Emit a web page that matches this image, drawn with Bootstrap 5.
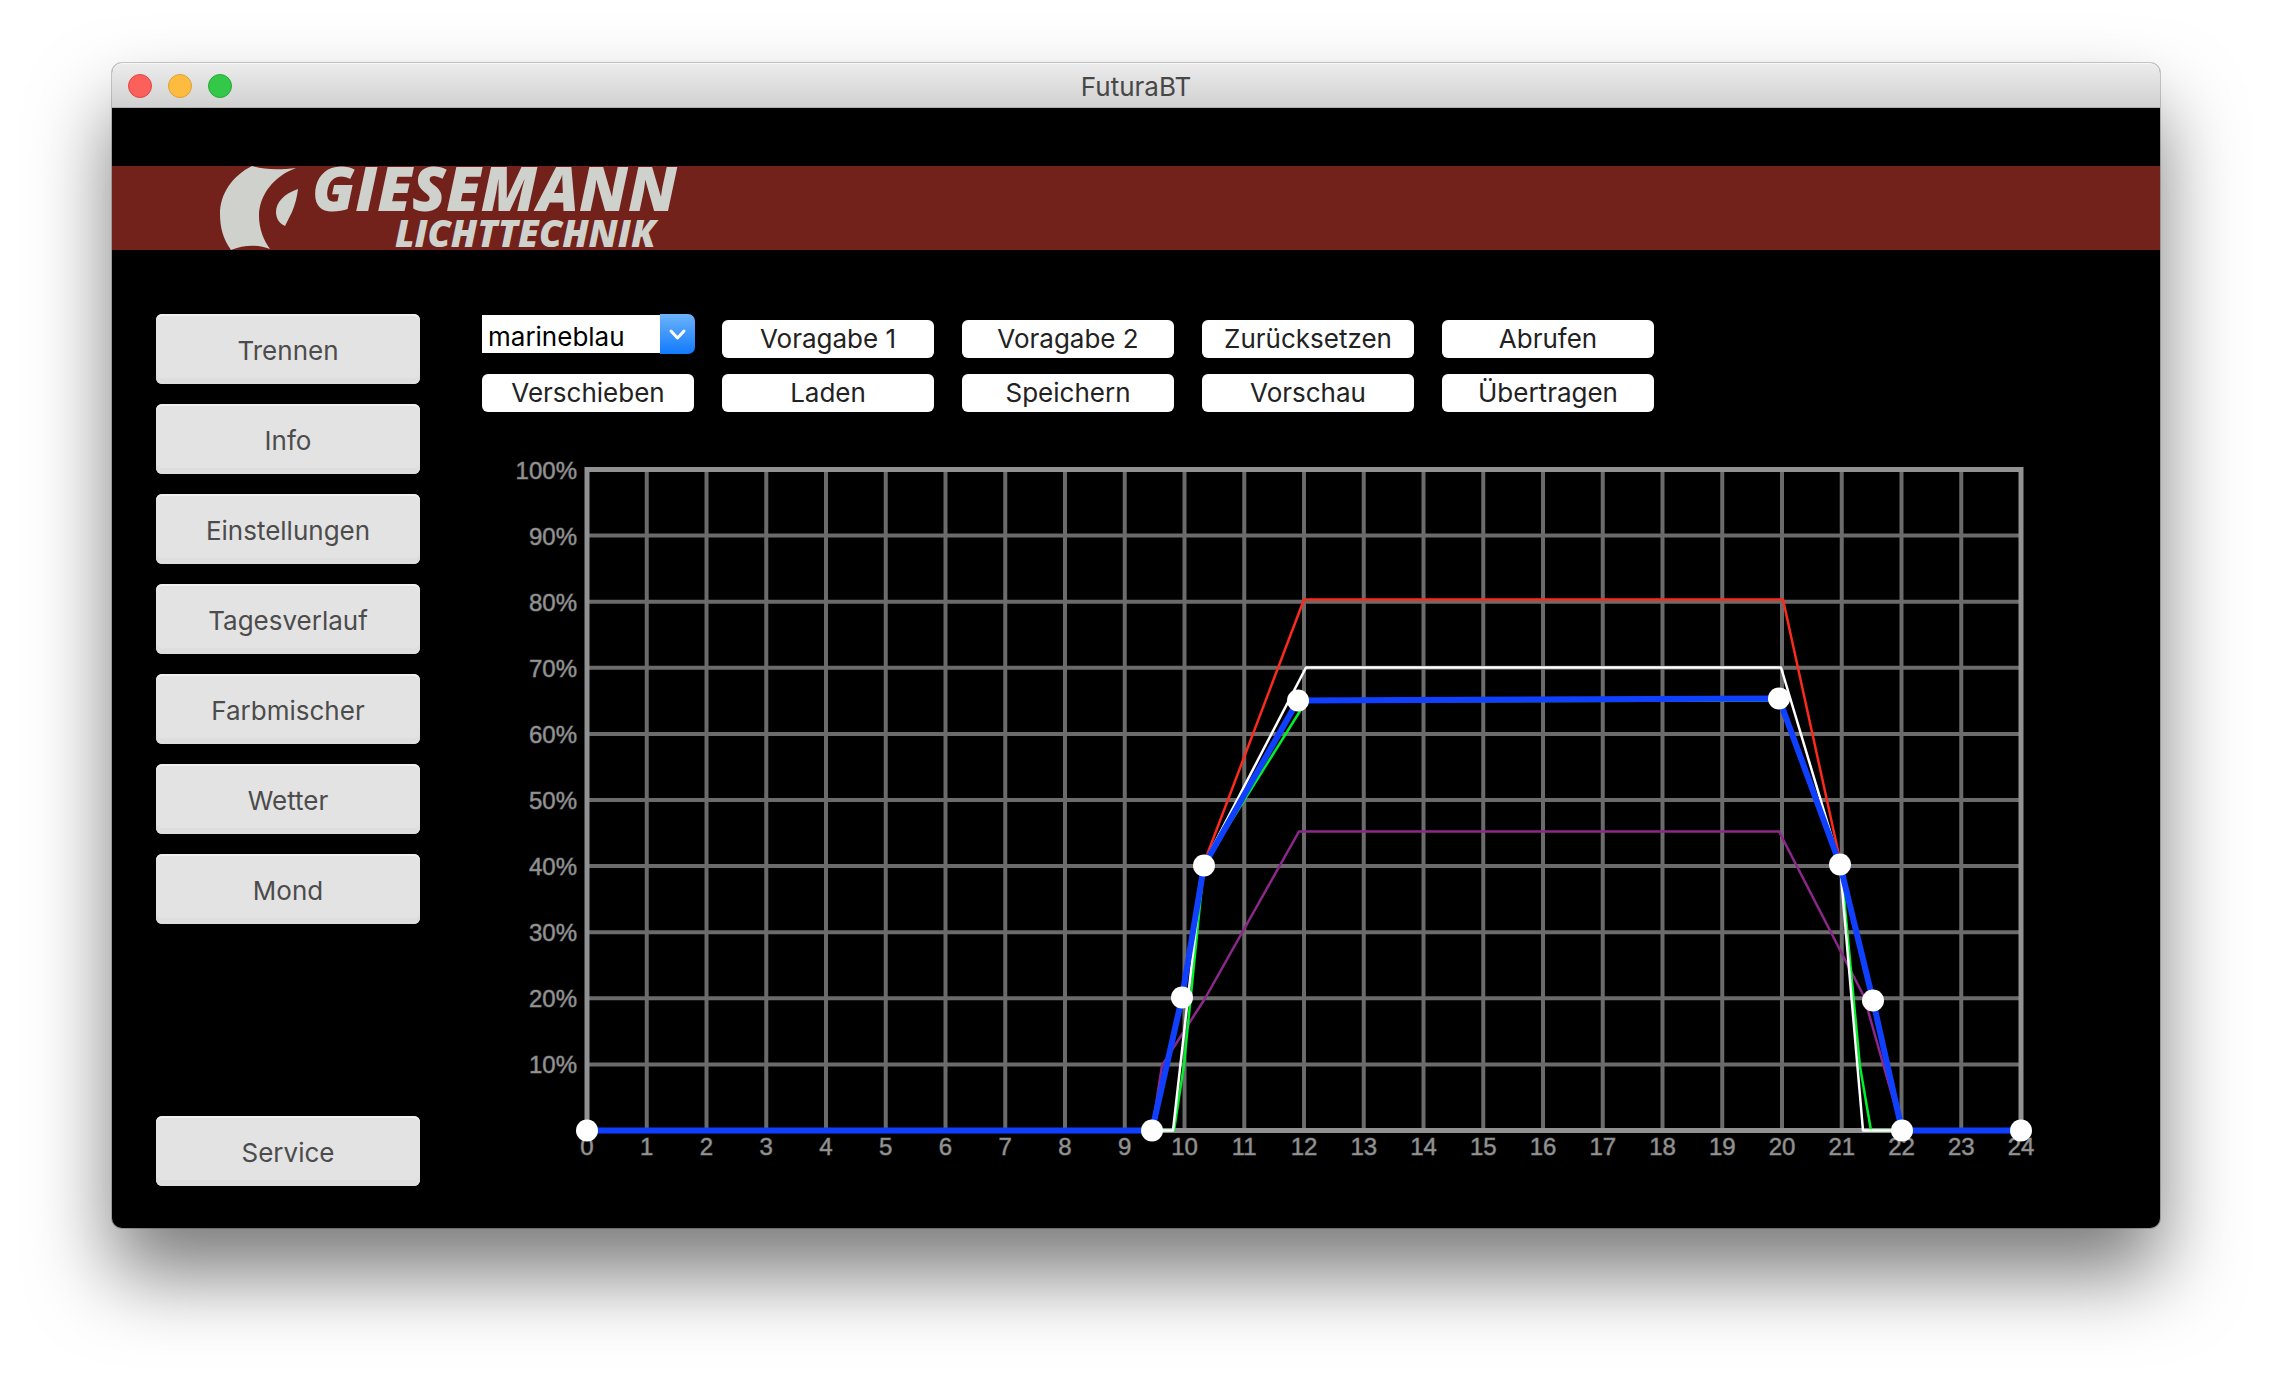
<!DOCTYPE html>
<html lang="de">
<head>
<meta charset="utf-8">
<meta name="viewport" content="width=device-width, initial-scale=1">
<title>FuturaBT</title>
<link href="https://cdn.jsdelivr.net/npm/bootstrap@5.3.0/dist/css/bootstrap.min.css" rel="stylesheet">
<style>
  body { background: #fff; font-family: Inter, Roboto, sans-serif; font-size: 26px; line-height: 32px; }
  .desktop { padding: 63px 112px 160px; }
  .app-window { background: #000; border-radius: 10px; box-shadow: 0 0 0 1px rgba(0,0,0,.2), 0 46px 80px rgba(0,0,0,.52); }
  .titlebar { height: 45px; padding-top: 3px; border-radius: 10px 10px 0 0; background: linear-gradient(#ececec, #d1d1d1); border-bottom: 1px solid #b0b0b0; box-shadow: inset 0 1px 0 #f7f7f7; color: #474747; }
  .lights { left: 16px; top: 11px; gap: 16px; }
  .light { width: 24px; height: 24px; padding: 0; border-radius: 50%; border: 1px solid; }
  .light-close { background: #fc605b; border-color: #df4744; }
  .light-min { background: #fdbc40; border-color: #de9f34; }
  .light-max { background: #34c84a; border-color: #27aa35; }
  .banner-area { padding-top: 58px; }
  .banner { height: 84px; padding-left: 108px; background: #72221a; }
  .content { padding: 64px 82px 42px 44px; gap: 62px; }
  .side { width: 264px; gap: 20px; }
  .btn-side { --bs-btn-color: #4c4c4c; --bs-btn-bg: #e3e3e3; --bs-btn-border-width: 0; --bs-btn-hover-bg: #eee; --bs-btn-border-radius: 6px; --bs-btn-font-size: 26px; height: 70px; padding: 4px 0 0; line-height: 32px; box-shadow: inset 0 2px 0 #f0f0f0, inset 0 -6px 0 #dedede; }
  .tools { display: grid; grid-template-columns: repeat(5, 212px); gap: 16px 28px; margin-bottom: 28px; }
  .btn-tool { --bs-btn-color: #222; --bs-btn-bg: #fff; --bs-btn-border-width: 0; --bs-btn-hover-bg: #eee; --bs-btn-border-radius: 6px; --bs-btn-font-size: 26px; height: 38px; padding: 0; line-height: 38px; align-self: end; }
  .picker { height: 44px; padding-top: 1px; }
  .picker select { appearance: none; display: block; width: 100%; height: 38px; padding: 5px 36px 0 6px; border: 0; border-radius: 0 6px 6px 0; background: #fff; color: #000; line-height: 32px; }
  .picker svg { right: -1px; top: 0; pointer-events: none; }
  .axis { font-family: "Liberation Sans", Arial, sans-serif; font-size: 24px; fill: #929292; stroke: #929292; stroke-width: 1px; stroke-opacity: .5; }
  .brand { font-family: "Open Sans", sans-serif; font-weight: 800; font-style: italic; fill: #cfd1cd; }
  .curve { fill: none; stroke-linejoin: round; }
</style>
<script src="https://cdn.jsdelivr.net/npm/bootstrap@5.3.0/dist/js/bootstrap.bundle.min.js"></script>
</head>
<body>
<div class="desktop">
  <div class="app-window">
    <header class="titlebar position-relative d-flex align-items-center justify-content-center">
      <div class="lights position-absolute d-flex">
        <button type="button" class="light light-close" aria-label="Schließen"></button>
        <button type="button" class="light light-min" aria-label="Minimieren"></button>
        <button type="button" class="light light-max" aria-label="Maximieren"></button>
      </div>
      <span>FuturaBT</span>
    </header>
    <div class="banner-area">
      <div class="banner">
        <svg class="d-block overflow-visible" width="462" height="84" viewBox="0 0 462 84" role="img" aria-label="Giesemann Lichttechnik">
          <g fill="#cfd1cd">
            <path d="M32 0C44 4 60 4 76 2C54 10 39 29 39 50C39 63 44 75 50 83C38 78 23 79 11 84C3 73 0 61 0 48C0 28 12 10 32 0Z"/>
            <path d="M78 23C64 28 56 36 56 46C56 53 60 58 65 60L72 46C75 39 77 31 78 23Z"/>
          </g>
          <text class="brand" font-size="62" x="92" y="45">GIESEMANN</text>
          <text class="brand" font-size="37" x="175" y="81">LICHTTECHNIK</text>
        </svg>
      </div>
    </div>
    <div class="content d-flex">
      <nav class="side d-flex flex-column flex-shrink-0">
        <button type="button" class="btn btn-side">Trennen</button>
        <button type="button" class="btn btn-side">Info</button>
        <button type="button" class="btn btn-side">Einstellungen</button>
        <button type="button" class="btn btn-side">Tagesverlauf</button>
        <button type="button" class="btn btn-side">Farbmischer</button>
        <button type="button" class="btn btn-side">Wetter</button>
        <button type="button" class="btn btn-side">Mond</button>
        <button type="button" class="btn btn-side mt-auto">Service</button>
      </nav>
      <main class="flex-grow-1">
        <div class="tools">
          <div class="picker position-relative">
            <select aria-label="Farbkanal"><option>marineblau</option></select>
            <svg class="position-absolute" width="35" height="40" viewBox="0 0 35 40" aria-hidden="true">
              <defs><linearGradient id="cap" x1="0" y1="0" x2="0" y2="1"><stop offset="0" stop-color="#6cb3fa"/><stop offset="1" stop-color="#117afd"/></linearGradient></defs>
              <path d="M0 0H28A7 7 0 0 1 35 7V33A7 7 0 0 1 28 40H0Z" fill="url(#cap)"/>
              <path d="M11 17L17.500 24L24 17" fill="none" stroke="#fff" stroke-width="3" stroke-linecap="round" stroke-linejoin="round"/>
            </svg>
          </div>
          <button type="button" class="btn btn-tool">Voragabe 1</button>
          <button type="button" class="btn btn-tool">Voragabe 2</button>
          <button type="button" class="btn btn-tool">Zurücksetzen</button>
          <button type="button" class="btn btn-tool">Abrufen</button>
          <button type="button" class="btn btn-tool">Verschieben</button>
          <button type="button" class="btn btn-tool">Laden</button>
          <button type="button" class="btn btn-tool">Speichern</button>
          <button type="button" class="btn btn-tool">Vorschau</button>
          <button type="button" class="btn btn-tool">Übertragen</button>
        </div>
        <svg class="d-block w-100" viewBox="0 0 1596 746" role="img" aria-label="Tagesverlauf in Prozent über 24 Stunden">
          <g transform="translate(105 29.5)">
            <g id="grid" stroke="#6b6b6b" stroke-width="4"></g>
            <rect width="1434" height="661" fill="none" stroke="#929292" stroke-width="5"/>
            <g id="labels" class="axis"></g>
            <polyline class="curve" stroke="#8e278b" stroke-width="2.500" points="565,661 575,596 618,529 712,362 1192,362 1277,527 1315,661"/>
            <polyline class="curve" stroke="#00f128" stroke-width="2.500" points="565,661 587,661 597,595 617,395 719,232 1192,231 1254,395 1273,597 1284,661 1315,661"/>
            <polyline class="curve" stroke="#fb2a1c" stroke-width="2.500" points="616,396 717,130 1196,130 1254,395"/>
            <polyline class="curve" stroke="#fff" stroke-width="2.500" points="565,661 586,661 601,528 616,396 719,198 1194,198 1253,395 1276,661 1315,661"/>
            <polyline class="curve" stroke="#1040ff" stroke-width="6" points="0,661 565,661 595,528 617,396 711,231 1192,229 1253,395 1286,531 1315,661 1434,661"/>
            <g fill="#fff">
              <circle cx="0" cy="661" r="11"/><circle cx="565" cy="661" r="11"/><circle cx="595" cy="528" r="11"/>
              <circle cx="617" cy="396" r="11"/><circle cx="711" cy="231" r="11"/><circle cx="1192" cy="229" r="11"/>
              <circle cx="1253" cy="395" r="11"/><circle cx="1286" cy="531" r="11"/><circle cx="1315" cy="661" r="11"/>
              <circle cx="1434" cy="661" r="11"/>
            </g>
          </g>
        </svg>
      </main>
    </div>
  </div>
</div>
<script>
  const ns = 'http://www.w3.org/2000/svg', W = 1434, H = 661;
  const add = (parent, tag, attrs, text) => {
    const el = document.createElementNS(ns, tag);
    for (const k in attrs) el.setAttribute(k, attrs[k]);
    if (text) el.textContent = text;
    document.getElementById(parent).append(el);
  };
  for (let h = 0; h <= 24; h++) {
    const x = W * h / 24;
    if (h > 0 && h < 24) add('grid', 'line', { x1: x, x2: x, y1: 0, y2: H });
    add('labels', 'text', { x: x, y: 685, 'text-anchor': 'middle' }, String(h));
  }
  for (let p = 10; p <= 100; p += 10) {
    const y = H * (100 - p) / 100;
    if (p < 100) add('grid', 'line', { x1: 0, x2: W, y1: y, y2: y });
    add('labels', 'text', { x: -10, y: y + 9, 'text-anchor': 'end' }, p + '%');
  }
</script>
</body>
</html>
